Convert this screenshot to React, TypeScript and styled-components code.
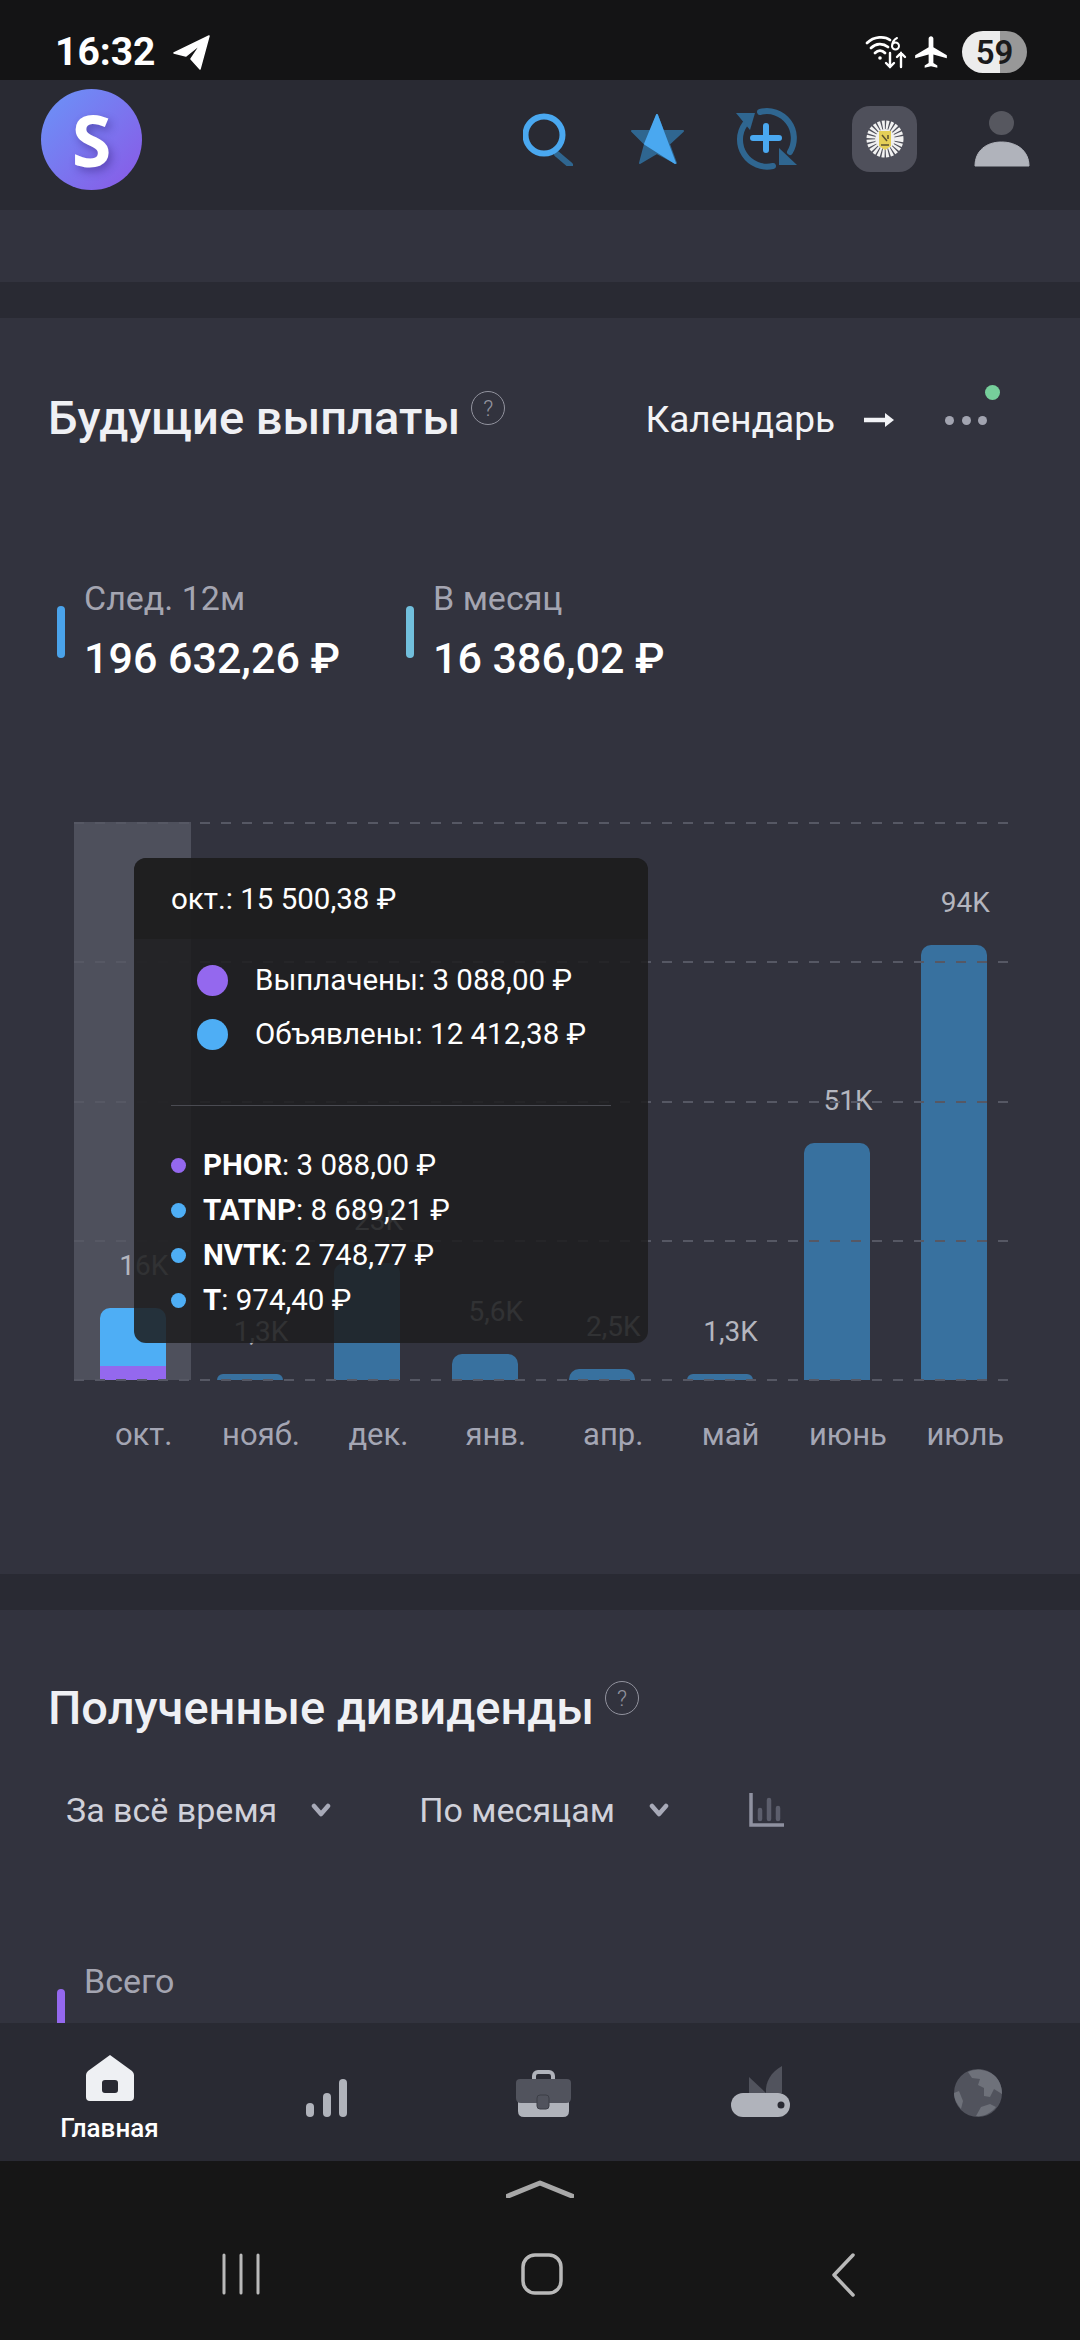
import styled, { createGlobalStyle } from "styled-components";
import { MdAirplanemodeActive } from "react-icons/md";

const GlobalStyle = createGlobalStyle`
  html, body {
    margin: 0;
    padding: 0;
    background: #161616;
    font-family: Roboto, "Noto Sans", sans-serif;
  }
  * {
    box-sizing: border-box;
  }
`;

const months = [
  { name: "окт.", value: "16K", height: 72, paid: 14, active: true },
  { name: "нояб.", value: "1,3K", height: 6 },
  { name: "дек.", value: "23K", height: 117 },
  { name: "янв.", value: "5,6K", height: 26 },
  { name: "апр.", value: "2,5K", height: 11 },
  { name: "май", value: "1,3K", height: 6 },
  { name: "июнь", value: "51K", height: 237 },
  { name: "июль", value: "94K", height: 435 },
];

const tickers = [
  { name: "PHOR", amount: "3 088,00 ₽", color: "#9468ee" },
  { name: "TATNP", amount: "8 689,21 ₽", color: "#4eaef5" },
  { name: "NVTK", amount: "2 748,77 ₽", color: "#4eaef5" },
  { name: "T", amount: "974,40 ₽", color: "#4eaef5" },
];

const HeaderIcons = () => (
  <IconRow>
    <IconSlot $left={0}>
      <svg width="50" height="53" viewBox="0 0 50 53" fill="none">
        <path d="M34 41 L47 52" stroke="#2f6690" strokeWidth="6" strokeLinecap="round" />
        <circle cx="21" cy="22" r="18.5" stroke="#4aa8f0" strokeWidth="6" />
      </svg>
    </IconSlot>
    <IconSlot $left={57}>
      <svg width="55" height="52" viewBox="0 0 55 52">
        <path
          d="M27 2 L33 18 L53 18 L39 31 L46 50 L27 40 L10 50 L15 31 L2 18 L21 18 Z"
          fill="#2f6690"
          stroke="#2f6690"
          strokeWidth="2"
          strokeLinejoin="round"
        />
        <path
          d="M27 2 L15 31 L45 50 Z"
          fill="#4aa8f0"
          stroke="#4aa8f0"
          strokeWidth="2"
          strokeLinejoin="round"
        />
      </svg>
    </IconSlot>
    <IconSlot $left={51}>
      <svg width="61" height="62" viewBox="0 0 61 62" fill="none">
        <path
          d="M24 4 A 27 27 0 0 1 54 44"
          stroke="#2f6690"
          strokeWidth="6"
          strokeLinecap="round"
        />
        <path d="M43 40 L61 57 L43 57 Z" fill="#2f6690" />
        <path
          d="M37 58 A 27 27 0 0 1 9 16"
          stroke="#2f6690"
          strokeWidth="6"
          strokeLinecap="round"
        />
        <path d="M0 5 L19 5 L14 22 Z" fill="#2f6690" />
        <path
          d="M17 30 H43 M30 18 V42"
          stroke="#4aa8f0"
          strokeWidth="6"
          strokeLinecap="round"
        />
      </svg>
    </IconSlot>
    <BrokerTile>
      <svg width="40" height="38" viewBox="0 0 40 38">
        <circle cx="20" cy="19" r="14" fill="none" stroke="#f1f1f1" strokeWidth="9" strokeDasharray="2.5 1.2" />
        <circle cx="20" cy="19" r="10" fill="#efefef" />
        <path d="M14 11 H26 V26 L20 30 L14 26 Z" fill="#e4cf58" />
        <path d="M17 15 L22 21 M23 15 V19 M16 25 H24" stroke="#5a5130" strokeWidth="1.5" />
      </svg>
    </BrokerTile>
    <IconSlot $left={57}>
      <svg width="56" height="56" viewBox="0 0 56 56">
        <ellipse cx="27.5" cy="12" rx="12.5" ry="12" fill="#56575f" />
        <path
          d="M1 55 C1 40 12 31 27.5 31 C43 31 55 40 55 55 Z"
          fill="#b0b3bb"
          stroke="#b0b3bb"
          strokeWidth="1"
          strokeLinejoin="round"
        />
      </svg>
    </IconSlot>
  </IconRow>
);

const StatusIcons = () => (
  <StatusRight>
    <svg width="42" height="34" viewBox="0 0 42 34" fill="none" stroke="#fff" strokeLinecap="round">
      <path d="M2 8 C9 1 20 1 25 5" strokeWidth="2.8" />
      <path d="M6 13 C11 8 18 8 23 12" strokeWidth="2.8" />
      <path d="M10 18 C13 15 17 15 20 18" strokeWidth="2.8" />
      <circle cx="15" cy="23" r="1.8" fill="#fff" stroke="none" />
      <path d="M32 3 C28 5 27 9 27 12 M27 11 A 3.4 3.4 0 1 0 34 11 A 3.4 3.4 0 1 0 27 11" strokeWidth="2" />
      <path d="M25 18 V32 M21 28 L25 32 L29 28" strokeWidth="2.4" />
      <path d="M36 32 V18 M32 22 L36 18 L40 22" strokeWidth="2.4" />
    </svg>
    <MdAirplanemodeActive size={38} color="#fff" />
    <Battery>59</Battery>
  </StatusRight>
);

const HomeIcon = () => (
  <svg width="48" height="47" viewBox="0 0 48 47">
    <path
      fillRule="evenodd"
      d="M24 0 L46 16 Q48 18 48 20 V42 Q48 46 44 46 H4 Q0 46 0 42 V20 Q0 18 2 16 Z M19 25 Q16 25 16 28 V35 Q16 38 19 38 H29 Q32 38 32 35 V28 Q32 25 29 25 Z"
      fill="#eef0f3"
    />
  </svg>
);

const BarsIcon = () => (
  <svg width="41" height="38" viewBox="0 0 41 38" fill="#b0b3bb">
    <rect x="0" y="24" width="8" height="14" rx="4" />
    <rect x="17" y="14" width="8" height="24" rx="4" />
    <rect x="33" y="0" width="8" height="38" rx="4" />
  </svg>
);

const CaseIcon = () => (
  <svg width="55" height="47" viewBox="0 0 55 47">
    <rect x="18" y="2" width="19" height="14" rx="4" fill="none" stroke="#b0b3bb" strokeWidth="4" />
    <path d="M2 32 H53 V41 Q53 47 47 47 H8 Q2 47 2 41 Z" fill="#b0b3bb" />
    <path d="M4 9 H51 Q55 9 55 13 V28 Q55 33 50 33 H5 Q0 33 0 28 V13 Q0 9 4 9 Z" fill="#51535d" />
    <rect x="21" y="25" width="12" height="14" rx="3" fill="#51535d" stroke="#3c3e47" strokeWidth="1" />
  </svg>
);

const KnifeIcon = () => (
  <svg width="59" height="51" viewBox="0 0 59 51">
    <path d="M18 11 L35 27 H18 Z" fill="#51535d" strokeLinejoin="round" />
    <path d="M51 0 V27 H35 C34 16 40 6 51 0 Z" fill="#51535d" />
    <rect x="0" y="27" width="59" height="24" rx="12" fill="#b0b3bb" />
    <circle cx="50" cy="39" r="3.5" fill="#292a33" />
  </svg>
);

const GlobeIcon = () => (
  <svg width="48" height="48" viewBox="0 0 48 48">
    <circle cx="24" cy="24" r="24" fill="#51535d" />
    <path
      d="M14 3 C22 -1 34 0 42 8 C47 14 48 20 48 25 L40 20 L36 28 L30 27 L30 19 L24 16 L26 10 L18 9 Z M0 24 L5 22 L9 32 L7 40 C3 35 0 30 0 24 Z M22 47 L27 38 L36 35 L42 38 C37 44 30 48 22 47 Z"
      fill="#6e717a"
    />
  </svg>
);

const Chevron = () => (
  <svg width="20" height="14" viewBox="0 0 20 14" fill="none">
    <path
      d="M3 3 L10 11 L17 3"
      stroke="#a8aab8"
      strokeWidth="4.5"
      strokeLinecap="round"
      strokeLinejoin="round"
    />
  </svg>
);

export default function App() {
  return (
    <Screen>
      <GlobalStyle />
      <StatusBar>
        <StatusLeft>
          <Clock>16:32</Clock>
          <svg width="38" height="36" viewBox="0 0 38 36">
            <path
              d="M36 2 L1 19 L13 22 L28 10 L18 25 L27 35 Z"
              fill="#fff"
              stroke="#fff"
              strokeWidth="1.5"
              strokeLinejoin="round"
            />
          </svg>
        </StatusLeft>
        <StatusIcons />
      </StatusBar>

      <Header>
        <Logo>S</Logo>
        <HeaderIcons />
      </Header>
      <Band />
      <Gap />

      <FutureCard>
        <TitleRow>
          <Title>Будущие выплаты</Title>
          <Help>?</Help>
          <TitleActions>
            <ActionLink>Календарь</ActionLink>
            <svg width="31" height="16" viewBox="0 0 31 16" fill="none">
              <path d="M1 8 H27" stroke="#f2f3f6" strokeWidth="4.5" />
              <path d="M22 1 L31 8 L22 15 Z" fill="#f2f3f6" />
            </svg>
            <MoreDots>
              <i />
              <i />
              <i />
              <Notice />
            </MoreDots>
          </TitleActions>
        </TitleRow>

        <StatRow>
          <Stat>
            <StatMark $color="#4aa3ea" />
            <div>
              <StatLabel>След. 12м</StatLabel>
              <StatValue>196 632,26 ₽</StatValue>
            </div>
          </Stat>
          <Stat>
            <StatMark $color="#71bfdc" />
            <div>
              <StatLabel>В месяц</StatLabel>
              <StatValue>16 386,02 ₽</StatValue>
            </div>
          </Stat>
        </StatRow>

        <Chart>
          <Columns>
            {months.map((m) => (
              <Column key={m.name} $active={m.active}>
                <BarValue>{m.value}</BarValue>
                {m.paid ? (
                  <>
                    <Bar $h={m.height - m.paid} $color="#4eaef5" />
                    <BarBase $h={m.paid} $color="#9468ee" />
                  </>
                ) : (
                  <Bar $h={m.height} $color="#38719f" />
                )}
              </Column>
            ))}
          </Columns>
          <GridLines>
            {[0, 1, 2, 3, 4].map((i) => (
              <GridLine key={i} />
            ))}
          </GridLines>
          <Tooltip>
            <TooltipHead>окт.: 15 500,38 ₽</TooltipHead>
            <Legend>
              <LegendRow>
                <LegendDot $color="#9468ee" />
                Выплачены: 3 088,00 ₽
              </LegendRow>
              <LegendRow>
                <LegendDot $color="#4eaef5" />
                Объявлены: 12 412,38 ₽
              </LegendRow>
            </Legend>
            <Divider />
            <TickerList>
              {tickers.map((t) => (
                <TickerRow key={t.name}>
                  <TickerDot $color={t.color} />
                  <span>
                    <b>{t.name}</b>: {t.amount}
                  </span>
                </TickerRow>
              ))}
            </TickerList>
          </Tooltip>
        </Chart>

        <AxisRow>
          {months.map((m) => (
            <AxisLabel key={m.name}>{m.name}</AxisLabel>
          ))}
        </AxisRow>
      </FutureCard>
      <Gap />

      <ReceivedCard>
        <TitleRow>
          <Title>Полученные дивиденды</Title>
          <Help>?</Help>
        </TitleRow>
        <Filters>
          <FilterText>За всё время</FilterText>
          <Chevron />
          <FilterText $left={54}>По месяцам</FilterText>
          <Chevron />
          <ChartToggle>
            <svg width="35" height="35" viewBox="0 0 35 35" fill="none">
              <path d="M2 0 V32 H35" stroke="#8f91a0" strokeWidth="3.5" />
              <path d="M11 17 V26 M20 7 V26 M29 15 V26" stroke="#5c5e6c" strokeWidth="4.5" strokeLinecap="round" />
            </svg>
          </ChartToggle>
        </Filters>
        <TotalStat>
          <StatMark $color="#9468ee" />
          <div>
            <StatLabel>Всего</StatLabel>
            <StatValue>&nbsp;</StatValue>
          </div>
        </TotalStat>
      </ReceivedCard>

      <BottomNav>
        <NavItem $active>
          <HomeIcon />
          <NavLabel>Главная</NavLabel>
        </NavItem>
        <NavItem>
          <BarsIcon />
        </NavItem>
        <NavItem>
          <CaseIcon />
        </NavItem>
        <NavItem>
          <KnifeIcon />
        </NavItem>
        <NavItem>
          <GlobeIcon />
        </NavItem>
      </BottomNav>

      <SystemNav>
        <svg width="68" height="18" viewBox="0 0 68 18" fill="none">
          <path d="M2 16 L34 3 L66 16" stroke="#a8a8a8" strokeWidth="5" strokeLinecap="round" strokeLinejoin="round" />
        </svg>
        <SystemButtons>
          <svg width="38" height="42" viewBox="0 0 38 42" fill="none" stroke="#b9b9b9" strokeWidth="3" strokeLinecap="round">
            <path d="M2 2 V40 M19 2 V40 M36 2 V40" />
          </svg>
          <svg width="42" height="42" viewBox="0 0 42 42" fill="none">
            <rect x="2" y="2" width="38" height="38" rx="12" stroke="#b9b9b9" strokeWidth="3.5" />
          </svg>
          <svg width="24" height="44" viewBox="0 0 24 44" fill="none">
            <path d="M22 2 L3 22 L22 42" stroke="#b9b9b9" strokeWidth="3.5" strokeLinecap="round" strokeLinejoin="round" />
          </svg>
        </SystemButtons>
      </SystemNav>
    </Screen>
  );
}

const Screen = styled.div`
  width: 1080px;
  height: 2340px;
  display: flex;
  flex-direction: column;
  overflow: hidden;
  background: #292a33;
  color: #f2f3f6;
`;

const StatusBar = styled.div`
  height: 80px;
  flex: none;
  padding: 24px 53px 0 55px;
  display: flex;
  align-items: center;
  justify-content: space-between;
  background: #141415;
`;
const StatusLeft = styled.div`
  display: flex;
  align-items: center;
  gap: 17px;
`;
const Clock = styled.span`
  font-size: 39px;
  font-weight: 700;
  color: #fff;
`;
const StatusRight = styled.div`
  display: flex;
  align-items: center;
  gap: 5px;
`;
const Battery = styled.div`
  width: 65px;
  height: 42px;
  margin-left: 7px;
  border-radius: 21px;
  display: flex;
  align-items: center;
  justify-content: center;
  background: linear-gradient(90deg, #ececec 58%, #989898 58%);
  color: #1a1a1a;
  font-size: 33px;
  font-weight: 600;
`;

const Header = styled.header`
  height: 130px;
  flex: none;
  padding: 0 50px 12px 41px;
  display: flex;
  align-items: center;
  justify-content: space-between;
  background: #292a33;
`;
const Logo = styled.div`
  width: 101px;
  height: 101px;
  border-radius: 50%;
  display: flex;
  align-items: center;
  justify-content: center;
  background: linear-gradient(135deg, #6a94f8 0%, #8a58e6 100%);
  color: #fff;
  font-family: "Open Sans", sans-serif;
  font-size: 72px;
  font-weight: 700;
  text-shadow: 3px 4px 8px rgba(50, 30, 120, 0.45);
`;
const IconRow = styled.div`
  display: flex;
  align-items: center;
`;
const IconSlot = styled.div<{ $left: number }>`
  display: flex;
  margin-left: ${(p) => p.$left}px;
`;
const BrokerTile = styled.div`
  width: 65px;
  height: 66px;
  margin-left: 55px;
  border-radius: 18px;
  display: flex;
  align-items: center;
  justify-content: center;
  background: #4f505b;
`;

const Band = styled.div`
  height: 72px;
  flex: none;
  background: #32333e;
`;
const Gap = styled.div`
  height: 36px;
  flex: none;
  background: #292a33;
`;

const FutureCard = styled.section`
  height: 1256px;
  flex: none;
  padding: 72px 0 0 48px;
  background: #32333e;
`;
const ReceivedCard = styled.section`
  flex: 1;
  min-height: 0;
  overflow: hidden;
  padding: 70px 0 0 48px;
  background: #32333e;
`;

const TitleRow = styled.div`
  height: 60px;
  display: flex;
  align-items: center;
`;
const Title = styled.h2`
  margin: -5px 0 0;
  font-size: 47px;
  font-weight: 500;
  color: #eff0f4;
`;
const Help = styled.span`
  width: 34px;
  height: 34px;
  margin: -24px 0 0 11px;
  border: 1.5px solid #92939e;
  border-radius: 50%;
  display: flex;
  align-items: center;
  justify-content: center;
  color: #92939e;
  font-size: 22px;
  font-weight: 300;
`;
const TitleActions = styled.div`
  margin-left: auto;
  padding-right: 93px;
  display: flex;
  align-items: center;
  gap: 28px;
`;
const ActionLink = styled.span`
  margin-top: -2px;
  font-size: 37px;
  color: #f2f3f6;
`;
const MoreDots = styled.div`
  position: relative;
  margin-left: 23px;
  display: flex;
  gap: 7.5px;

  i {
    width: 9px;
    height: 9px;
    border-radius: 50%;
    background: #a2a4b0;
  }
`;
const Notice = styled.span`
  position: absolute;
  top: -31px;
  right: -13px;
  width: 15px;
  height: 15px;
  border-radius: 50%;
  background: #76cf9b;
`;

const StatRow = styled.div`
  margin-top: 130px;
  padding-left: 9px;
  display: flex;
  gap: 66px;
`;
const Stat = styled.div`
  display: flex;
  align-items: flex-end;
  gap: 19px;
`;
const TotalStat = styled(Stat)`
  margin-top: 133px;
  padding-left: 9px;
`;
const StatMark = styled.span<{ $color: string }>`
  width: 8px;
  height: 52px;
  margin-bottom: 20px;
  border-radius: 4px;
  background: ${(p) => p.$color};
`;
const StatLabel = styled.div`
  margin-top: -2px;
  font-size: 34px;
  line-height: 40px;
  color: #a4a5b1;
`;
const StatValue = styled.div`
  margin-top: 20px;
  font-size: 43px;
  line-height: 40px;
  font-weight: 500;
  color: #fff;
`;

const Chart = styled.div`
  position: relative;
  width: 939px;
  height: 558px;
  margin: 144px 0 0 26px;
`;
const Columns = styled.div`
  height: 100%;
  display: grid;
  grid-template-columns: repeat(8, 1fr);
`;
const Column = styled.div<{ $active?: boolean }>`
  display: flex;
  flex-direction: column;
  align-items: center;
  justify-content: flex-end;
  background: ${(p) => (p.$active ? "#4e505c" : "transparent")};
`;
const BarValue = styled.div`
  margin-bottom: 27px;
  padding-left: 22px;
  font-size: 28px;
  line-height: 30px;
  color: #b4b6bf;
`;
const Bar = styled.div<{ $h: number; $color: string }>`
  width: 66px;
  height: ${(p) => p.$h}px;
  flex: none;
  border-radius: 10px 10px 0 0;
  background: ${(p) => p.$color};
`;
const BarBase = styled(Bar)`
  border-radius: 0;
`;
const GridLines = styled.div`
  position: absolute;
  top: 0;
  left: 0;
  right: 5px;
  bottom: -1px;
  display: flex;
  flex-direction: column;
  justify-content: space-between;
  pointer-events: none;
`;
const GridLine = styled.div`
  height: 2px;
  background: repeating-linear-gradient(
    90deg,
    #565864 0 10px,
    transparent 10px 21px
  );
`;

const Tooltip = styled.div`
  position: absolute;
  top: 36px;
  left: 60px;
  width: 514px;
  height: 485px;
  border-radius: 12px;
  overflow: hidden;
  background: rgba(30, 30, 31, 0.87);
  color: #fff;
  font-size: 29.5px;
`;
const TooltipHead = styled.div`
  height: 81px;
  padding-left: 37px;
  display: flex;
  align-items: center;
  background: rgba(30, 30, 31, 0.75);
`;
const Legend = styled.div`
  padding: 23px 0 0 63px;
  display: flex;
  flex-direction: column;
  gap: 18px;
`;
const LegendRow = styled.div`
  height: 36px;
  display: flex;
  align-items: center;
  gap: 27px;
`;
const LegendDot = styled.span<{ $color: string }>`
  width: 31px;
  height: 31px;
  border-radius: 50%;
  background: ${(p) => p.$color};
`;
const Divider = styled.div`
  height: 1px;
  margin: 53px 37px 0;
  background: #4a4b52;
`;
const TickerList = styled.div`
  margin-top: 41px;
  padding-left: 37px;
  display: flex;
  flex-direction: column;
  gap: 9px;

  b {
    font-weight: 700;
  }
`;
const TickerRow = styled.div`
  height: 36px;
  display: flex;
  align-items: center;
  gap: 17px;
`;
const TickerDot = styled.span<{ $color: string }>`
  width: 15px;
  height: 15px;
  border-radius: 50%;
  background: ${(p) => p.$color};
`;

const AxisRow = styled.div`
  width: 939px;
  margin: 35px 0 0 26px;
  display: grid;
  grid-template-columns: repeat(8, 1fr);
`;
const AxisLabel = styled.div`
  padding-left: 22px;
  text-align: center;
  font-size: 31px;
  line-height: 40px;
  white-space: nowrap;
  color: #a4a6b4;
`;

const Filters = styled.div`
  height: 40px;
  margin-top: 50px;
  padding-left: 18px;
  display: flex;
  align-items: center;
  gap: 34px;
`;
const FilterText = styled.span<{ $left?: number }>`
  margin-left: ${(p) => p.$left ?? 0}px;
  font-size: 34px;
  color: #d0d1da;
`;
const ChartToggle = styled.div`
  display: flex;
  margin-left: 46px;
`;

const BottomNav = styled.nav`
  height: 138px;
  flex: none;
  padding-left: 1px;
  display: grid;
  grid-template-columns: repeat(5, 217px);
  background: #292a33;
`;
const NavItem = styled.div<{ $active?: boolean }>`
  display: flex;
  flex-direction: column;
  align-items: center;
  justify-content: flex-end;
  padding-bottom: ${(p) => (p.$active ? 18 : 44)}px;
`;
const NavLabel = styled.span`
  margin-top: 11px;
  font-size: 26px;
  line-height: 30px;
  font-weight: 500;
  color: #fff;
`;

const SystemNav = styled.div`
  height: 179px;
  flex: none;
  padding-top: 19px;
  display: flex;
  flex-direction: column;
  align-items: center;
  background: #161616;
`;
const SystemButtons = styled.div`
  width: 907px;
  margin-top: 55px;
  padding-left: 4px;
  display: grid;
  grid-template-columns: repeat(3, 1fr);
  justify-items: center;
`;
